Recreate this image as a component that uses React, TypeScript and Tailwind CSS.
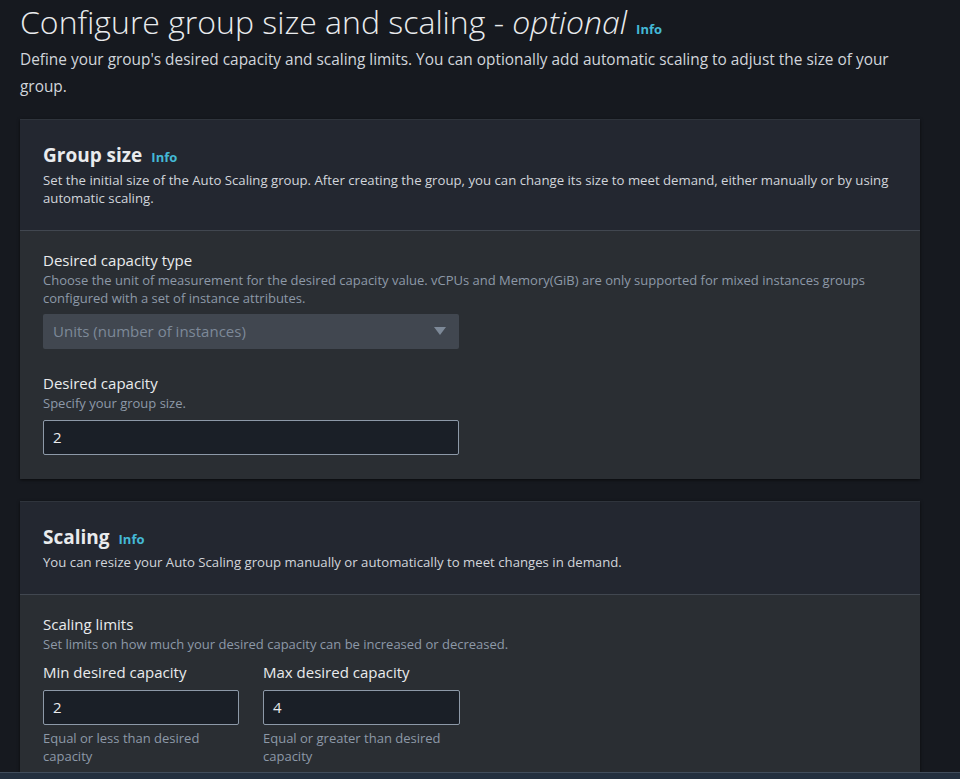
const FONT = "font-['Open_Sans',_'Noto_Sans',_sans-serif]";

function InfoLink({ className = "" }: { className?: string }) {
  return (
    <span className={`font-bold text-[#44b9d6] ${className}`}>Info</span>
  );
}

function Label({ children }: { children: React.ReactNode }) {
  return <div className="text-[15px] leading-[22px] font-medium text-[#e9ebed]">{children}</div>;
}

function Hint({ children }: { children: React.ReactNode }) {
  return <div className="text-[13px] leading-[18px] text-[#8d99a8]">{children}</div>;
}

function TextInput({ value, className = "" }: { value: string; className?: string }) {
  return (
    <div
      className={`h-[35px] flex items-center px-[9px] rounded-[2px] border border-[#8d99a8] bg-[#1a1f27] text-[15px] text-[#e9ebed] ${className}`}
    >
      {value}
    </div>
  );
}

function CardHeader({ title, desc }: { title: string; desc: string }) {
  return (
    <div className="bg-[#232730] px-[23px] pt-[22px] pb-[23px] border-b border-[#414750]">
      <div className="flex items-baseline gap-[9px]">
        <h2 className="text-[19px] leading-[26px] font-bold text-[#e9ebed]">{title}</h2>
        <InfoLink className="text-[13px]" />
      </div>
      <p className="mt-[3px] text-[13.2px] leading-[18px] text-[#d1d5db] max-w-[860px]">{desc}</p>
    </div>
  );
}

export default function App() {
  return (
    <div className={`${FONT} h-[779px] bg-[#16191f] flex flex-col overflow-hidden`}>
      <div className="flex-1 min-h-0 overflow-hidden px-[20px] pt-[2px]">
        <div className="flex items-baseline gap-[9px]">
          <h1 className="text-[32px] leading-[40px] font-light text-[#e9ebed]">
            Configure group size and scaling - <i>optional</i>
          </h1>
          <InfoLink className="text-[13px]" />
        </div>
        <p className="mt-[4px] text-[15.4px] leading-[27px] text-[#d1d5db] max-w-[890px]">
          Define your group's desired capacity and scaling limits. You can optionally add automatic scaling to adjust
          the size of your group.
        </p>

        {/* Group size */}
        <section className="mt-[19px] w-[900px] border-t border-[#2f343c] shadow-[0_1px_3px_rgba(0,0,0,0.6)]">
          <CardHeader
            title="Group size"
            desc="Set the initial size of the Auto Scaling group. After creating the group, you can change its size to meet demand, either manually or by using automatic scaling."
          />
          <div className="bg-[#2a2e33] px-[23px] pt-[18px] pb-[24px]">
            <Label>Desired capacity type</Label>
            <Hint>
              Choose the unit of measurement for the desired capacity value. vCPUs and Memory(GiB) are only supported for
              mixed instances groups configured with a set of instance attributes.
            </Hint>
            <div className="mt-[7px] w-[416px] h-[35px] rounded-[2px] bg-[#414750] flex items-center justify-between pl-[10px] pr-[13px] text-[15px] text-[#7d8998]">
              <span>Units (number of instances)</span>
              <svg width="12" height="9" viewBox="0 0 12 9">
                <path d="M0 0h12L6 8z" fill="#7d8998" />
              </svg>
            </div>

            <div className="mt-[23px]">
              <Label>Desired capacity</Label>
              <Hint>Specify your group size.</Hint>
              <TextInput value="2" className="mt-[8px] w-[416px]" />
            </div>
          </div>
        </section>

        {/* Scaling */}
        <section className="mt-[22px] w-[900px] border-t border-[#2f343c] shadow-[0_1px_3px_rgba(0,0,0,0.6)]">
          <CardHeader
            title="Scaling"
            desc="You can resize your Auto Scaling group manually or automatically to meet changes in demand."
          />
          <div className="bg-[#2a2e33] px-[23px] pt-[18px] pb-[20px]">
            <Label>Scaling limits</Label>
            <Hint>Set limits on how much your desired capacity can be increased or decreased.</Hint>
            <div className="mt-[8px] flex gap-[24px]">
              <div className="w-[196px]">
                <Label>Min desired capacity</Label>
                <TextInput value="2" className="mt-[7px]" />
                <div className="mt-[4px]">
                  <Hint>Equal or less than desired capacity</Hint>
                </div>
              </div>
              <div className="w-[197px]">
                <Label>Max desired capacity</Label>
                <TextInput value="4" className="mt-[7px]" />
                <div className="mt-[4px]">
                  <Hint>Equal or greater than desired capacity</Hint>
                </div>
              </div>
            </div>
          </div>
        </section>
      </div>
      <div className="h-[7px] shrink-0 bg-[#232f3e] border-t border-[#414d5c]" />
    </div>
  );
}
